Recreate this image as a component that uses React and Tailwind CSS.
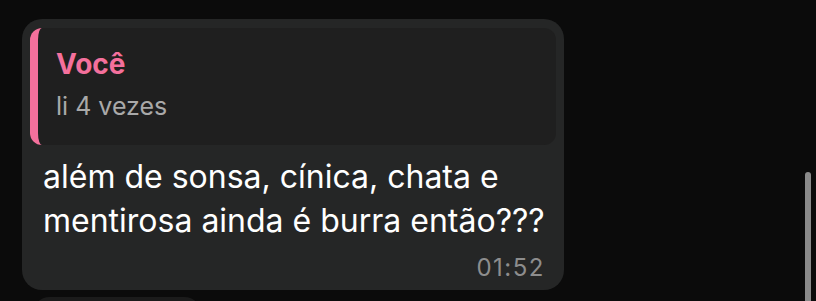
import React from 'react'

const QuotedReply = ({ author, text }) => {
  return (
    <div className='flex flex-col rounded-[12px] border-l-[8px] border-[#f4709c] bg-[#1f1f1f] pl-[18px] pt-[19px] h-[117px]'>
      <p className='text-[28px] leading-[34px] font-bold text-[#f4709c]'>{author}</p>
      <p className='mt-[10px] text-[25px] leading-[30px] text-[#a9a9a9]'>{text}</p>
    </div>
  )
}

const MessageBubble = ({ lines, time }) => {
  return (
    <div className='w-[542px] rounded-[20px] bg-[#252626] px-[8px] pt-[9px] pb-[7px]'>
      <QuotedReply author='Você' text='li 4 vezes' />
      <div className='px-[13px] pt-[10px]'>
        {lines.map((line, i) => (
          <p key={i} className='whitespace-nowrap text-[32px] leading-[44px] text-white'>{line}</p>
        ))}
      </div>
      <div className='flex justify-end pr-[11px] mt-[10px]'>
        <span className='text-[24px] leading-[30px] text-[#8d8d8d] tracking-[1.5px]'>{time}</span>
      </div>
    </div>
  )
}

export default function App() {
  return (
    <div className='relative w-[816px] h-[301px] overflow-hidden bg-[#0b0b0b]' style={{ fontFamily: 'Inter, "Noto Sans", sans-serif' }}>
      <div className='flex flex-col gap-[7px] pt-[19px] pl-[22px]'>
        <MessageBubble
          lines={['além de sonsa, cínica, chata e', 'mentirosa ainda é burra então???']}
          time='01:52'
        />
        <div className='ml-[10px] w-[170px] h-[40px] rounded-[18px] bg-[#1b1b1b]' />
      </div>
      {/* scroll indicator */}
      <div className='absolute left-[805px] top-[172px] w-[6px] h-[140px] rounded-full bg-[#8a8a8a]' />
    </div>
  )
}
